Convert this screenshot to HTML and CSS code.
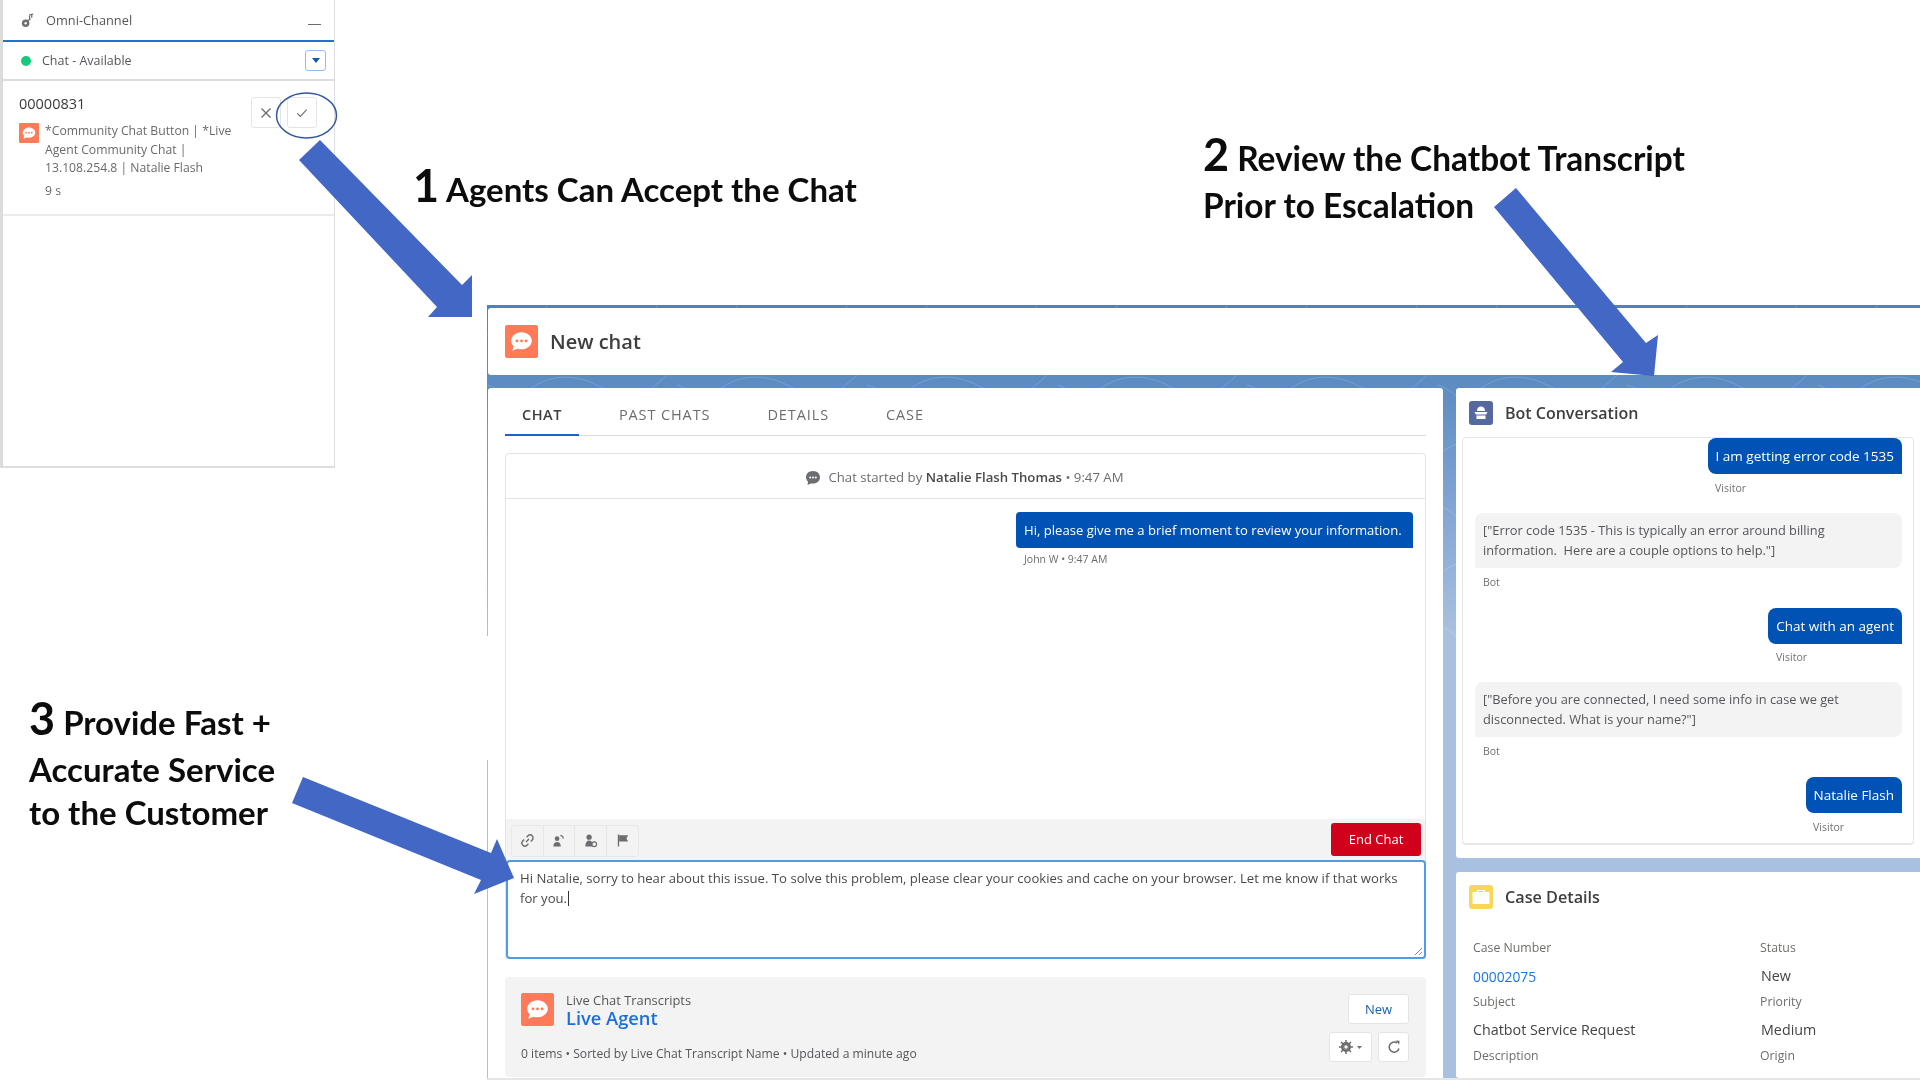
FILE: index.html
```html
<!DOCTYPE html>
<html>
<head>
  <title>Chatbot escalation</title>
  <meta name="viewport" content="width=device-width, initial-scale=1">
  <link rel="stylesheet" href="styles.css">
</head>
<body>
  <svg class="defs" width="0" height="0">
    <symbol id="chat-icon" viewBox="0 0 32 32">
      <rect width="32" height="32" rx="2" fill="#ff7a59"/>
      <path d="M16 7c-5.500 0-10 3.700-10 8.300 0 2 .9 3.800 2.300 5.200L7 25l5-2c1.200.4 2.600.6 4 .6 5.500 0 10-3.700 10-8.300S21.500 7 16 7z" fill="#fff"/>
      <circle cx="11.600" cy="15.400" r="1.400" fill="#ff7a59"/>
      <circle cx="16" cy="15.400" r="1.400" fill="#ff7a59"/>
      <circle cx="20.400" cy="15.400" r="1.400" fill="#ff7a59"/>
    </symbol>
  </svg>
  <div class="canvas">

    <div class="omni">
      <div class="omni-head">
        <svg class="omni-icon" viewBox="0 0 16 16"><circle cx="6" cy="11" r="4" fill="#706e6b"/><path d="M4 9.500 10.500 7 10 2.500M12.500 1v4M10 2l4-.8" fill="none" stroke="#706e6b" stroke-width="1.300"/><circle cx="6" cy="11" r="1.300" fill="#fff"/></svg>
        <span class="omni-title">Omni-Channel</span>
        <span class="omni-min"></span>
      </div>
      <div class="omni-status">
        <span class="status-dot"></span>
        <span>Chat - Available</span>
        <span class="status-drop"><i></i></span>
      </div>
      <div class="omni-item">
        <div class="omni-item-main">
          <div class="omni-num">00000831</div>
          <div class="omni-row">
            <svg class="omni-chat"><use href="#chat-icon"/></svg>
            <div class="omni-desc">
              *Community Chat Button | *Live<br>Agent Community Chat |<br>13.108.254.8 | Natalie Flash
              <div class="omni-time">9 s</div>
            </div>
          </div>
        </div>
        <div class="omni-actions">
          <button class="omni-btn"><svg viewBox="0 0 12 12"><path d="M1.500 1.500l9 9M10.500 1.500l-9 9" stroke="#6b6b6b" stroke-width="1.300"/></svg></button>
          <button class="omni-btn"><svg viewBox="0 0 14 12"><path d="M1.500 6.500 5 10l7.500-8" fill="none" stroke="#6b6b6b" stroke-width="1.200"/></svg></button>
        </div>
      </div>
    </div>

    <div class="console">
      <svg class="console-lines" width="1433" height="340">
        <defs>
          <pattern id="topo" width="190" height="120" patternUnits="userSpaceOnUse">
            <path d="M0 30c30-22 60-18 80 0s60 24 110 0M20 120c10-40 50-60 90-40s50 10 80-20M60 0c-6 30 20 44 50 36s50-6 60-36M0 80c20 6 30 20 24 40" fill="none" stroke="#fff" stroke-opacity=".16" stroke-width="1"/>
          </pattern>
        </defs>
        <rect width="1433" height="340" fill="url(#topo)"/>
      </svg>
      <div class="console-head">
        <svg class="head-icon"><use href="#chat-icon"/></svg>
        <span class="head-title">New chat</span>
      </div>
      <div class="console-body">
        <div class="col-left">
          <div class="tabs">
            <span class="tab active">CHAT</span>
            <span class="tab">PAST CHATS</span>
            <span class="tab">DETAILS</span>
            <span class="tab">CASE</span>
          </div>
          <div class="chat-box">
            <div class="chat-started">
              <svg class="started-icon" viewBox="0 0 16 16"><path d="M8 1C3.800 1 1 3.800 1 7.200c0 1.700.8 3.200 2 4.300L2.600 15l3.400-1.600c.6.1 1.300.2 2 .2 4.200 0 7-2.900 7-6.300S12.200 1 8 1z" fill="#6b6d70"/><circle cx="5.200" cy="7.400" r="1" fill="#fff"/><circle cx="8" cy="7.400" r="1" fill="#fff"/><circle cx="10.800" cy="7.400" r="1" fill="#fff"/></svg>
              <span>Chat started by <b>Natalie Flash Thomas</b> • 9:47 AM</span>
            </div>
            <div class="chat-log">
              <div class="agent-msg">Hi, please give me a brief moment to review your information.</div>
              <div class="agent-meta">John W • 9:47 AM</div>
            </div>
            <div class="chat-tools">
              <div class="tool-group">
                <span class="tool"><svg viewBox="0 0 16 16"><path d="M6.500 9.500 9.500 6.500M7 4.500l1.500-1.500a3 3 0 0 1 4.500 4.500L11.500 9M9 11.500 7.500 13A3 3 0 0 1 3 8.500L4.500 7" fill="none" stroke="#6b6d70" stroke-width="1.500"/></svg></span>
                <span class="tool"><svg viewBox="0 0 16 16"><circle cx="6.500" cy="6" r="2.500" fill="#6b6d70"/><path d="M2.500 14.500c0-3 1.500-5 4-5s4 2 4 5z" fill="#6b6d70"/><path d="M10 2.500c2 .3 3 1.500 3.200 3.500" fill="none" stroke="#6b6d70" stroke-width="1.200"/></svg></span>
                <span class="tool"><svg viewBox="0 0 16 16"><circle cx="6.500" cy="4.500" r="2.800" fill="#6b6d70"/><path d="M2.500 14.500c0-4 1.500-6.500 4-6.500 1.500 0 2.500.8 3.200 2v4.500z" fill="#6b6d70"/><circle cx="12" cy="12" r="2.500" fill="none" stroke="#6b6d70" stroke-width="1.200"/></svg></span>
                <span class="tool"><svg viewBox="0 0 16 16"><path d="M3 1.500h1.400v13H3z" fill="#6b6d70"/><path d="M4.400 2.500h9.600l-1.800 3.300 1.800 3.300H4.400z" fill="#6b6d70"/></svg></span>
              </div>
              <button class="end-chat">End Chat</button>
            </div>
            <div class="chat-input">
              Hi Natalie, sorry to hear about this issue. To solve this problem, please clear your cookies and cache on your browser. Let me know if that works<br>for you.<span class="caret"></span>
              <svg class="grip" viewBox="0 0 10 10"><path d="M9 2 2 9M9 6 6 9" stroke="#888" stroke-width="1"/></svg>
            </div>
          </div>
          <div class="transcripts">
            <div class="tr-top">
              <svg class="tr-icon"><use href="#chat-icon"/></svg>
              <div class="tr-title">
                <div class="tr-kind">Live Chat Transcripts</div>
                <div class="tr-name">Live Agent</div>
              </div>
              <button class="tr-new">New</button>
            </div>
            <div class="tr-bottom">
              <span class="tr-info">0 items • Sorted by Live Chat Transcript Name • Updated a minute ago</span>
              <span class="tr-btns">
                <button class="tr-gear"><svg viewBox="0 0 24 14"><circle cx="7" cy="7" r="3.800" fill="none" stroke="#6b6d70" stroke-width="2.400"/><path d="M7 0v14M0 7h14M2 2l10 10M12 2 2 12" stroke="#6b6d70" stroke-width="1.500"/><circle cx="7" cy="7" r="1.700" fill="#fff"/><path d="M18 6h5l-2.500 3z" fill="#6b6d70"/></svg></button>
                <button class="tr-refresh"><svg viewBox="0 0 14 14"><path d="M12 8.500A5 5 0 1 1 10 3" fill="none" stroke="#6b6d70" stroke-width="1.500"/><path d="M8.500 .5l4 .3-.3 4z" fill="#6b6d70"/></svg></button>
              </span>
            </div>
          </div>
        </div>

        <div class="col-right">
          <div class="card bot-card">
            <div class="card-head">
              <svg class="card-icon" viewBox="0 0 24 24"><rect width="24" height="24" rx="3" fill="#55699f"/><path d="M12 5.500c-2.500 0-4 1.700-4 4.500h8c0-2.800-1.500-4.500-4-4.500zM5.500 11h13l-1.300 2.500H6.800zM7.500 14.500h9v3.500h-9z" fill="#fff"/></svg>
              <span class="card-title">Bot Conversation</span>
            </div>
            <div class="bot-log">
              <div class="msg-out">I am getting error code 1535</div>
              <div class="meta-out first">Visitor</div>
              <div class="msg-in">["Error code 1535 - This is typically an error around billing<br>information.&nbsp; Here are a couple options to help."]</div>
              <div class="meta-in">Bot</div>
              <div class="msg-out">Chat with an agent</div>
              <div class="meta-out chat">Visitor</div>
              <div class="msg-in">["Before you are connected, I need some info in case we get<br>disconnected. What is your name?"]</div>
              <div class="meta-in">Bot</div>
              <div class="msg-out">Natalie Flash</div>
              <div class="meta-out name">Visitor</div>
            </div>
          </div>
          <div class="card case-card">
            <div class="card-head">
              <svg class="card-icon" viewBox="0 0 24 24"><rect width="24" height="24" rx="3" fill="#f9d558"/><path d="M8 7V5h8v2h3.500a1 1 0 0 1 1 1v10a1 1 0 0 1-1 1h-15a1 1 0 0 1-1-1V8a1 1 0 0 1 1-1z" fill="#fff"/><path d="M9.500 7V6h5v1z" fill="#f9d558"/></svg>
              <span class="card-title">Case Details</span>
            </div>
            <div class="case-grid">
              <div class="field"><label>Case Number</label><a>00002075</a></div>
              <div class="field"><label>Status</label><span>New</span></div>
              <div class="field"><label>Subject</label><span>Chatbot Service Request</span></div>
              <div class="field"><label>Priority</label><span>Medium</span></div>
              <div class="field"><label>Description</label></div>
              <div class="field"><label>Origin</label><span>Web</span></div>
            </div>
          </div>
        </div>
      </div>
    </div>

    <div class="line-mask"></div>

    <div class="note note-1"><b>1</b> Agents Can Accept the Chat</div>
    <div class="note note-2"><div><b>2</b> Review the Chatbot Transcript</div><div>Prior to Escalation</div></div>
    <div class="note note-3"><div><b>3</b> Provide Fast +</div><div>Accurate Service</div><div class="tight">to the Customer</div></div>

    <svg class="arrows" viewBox="0 0 1920 1080">
      <polygon points="320,140 462,285 472,275 472,317 428,317 437,307 299,160"/>
      <polygon points="1516,188 1646,343 1658,335 1654,376 1611,372 1623,362 1494,207"/>
      <polygon points="303,777 491,853 497,839 514,878 474,894 481,880 292,803"/>
      <ellipse class="ring" cx="306.500" cy="115.500" rx="30" ry="22.500"/>
    </svg>
  </div>
</body>
</html>
```

FILE: styles.css
```css
* {
  box-sizing: border-box;
}
body {
  margin: 0;
  background: #fff;
  font-family: "Open Sans", sans-serif;
  color: #3e3e3c;
}
button {
  font: inherit;
  cursor: pointer;
  background: #fff;
  padding: 0;
}
.defs {
  position: absolute;
}
.canvas {
  position: relative;
  width: 1920px;
  height: 1080px;
  overflow: hidden;
  background: #fff;
  filter: blur(.6px);
}

/* omni channel panel */
.omni {
  position: absolute;
  left: 0;
  top: 0;
  width: 335px;
  height: 468px;
  border-left: 3px solid #dcdcdc;
  border-right: 1px solid #dedede;
  border-bottom: 2px solid #dedede;
  font-size: 12.500px;
}
.omni-head {
  display: flex;
  align-items: center;
  height: 42px;
  padding: 0 13px 0 17px;
  border-bottom: 2px solid #1f72d1;
  color: #54565a;
}
.omni-icon {
  width: 15px;
  height: 15px;
  margin-right: 11px;
}
.omni-title {
  flex: 1;
  font-size: 12.800px;
}
.omni-min {
  width: 13px;
  height: 1px;
  margin-top: 8px;
  background: #6b6b6b;
}
.omni-status {
  display: flex;
  align-items: center;
  gap: 11px;
  height: 39px;
  padding: 0 8px 0 18px;
  border-bottom: 2px solid #dcdcdc;
  color: #54565a;
}
.status-dot {
  width: 10px;
  height: 10px;
  border-radius: 50%;
  background: #16c97c;
}
.status-drop {
  display: flex;
  align-items: center;
  justify-content: center;
  width: 21px;
  height: 21px;
  margin-left: auto;
  border: 1px solid #8fbdf0;
  border-radius: 3px;
}
.status-drop i {
  border: 4px solid transparent;
  border-top: 5px solid #0d5cb0;
  border-bottom: 0;
}
.omni-item {
  display: flex;
  justify-content: space-between;
  height: 135px;
  padding: 15px 17px 0 16px;
  border-bottom: 2px solid #ebebeb;
}
.omni-num {
  font-size: 14.500px;
  font-weight: 500;
  color: #3a3a3a;
  line-height: 16px;
}
.omni-row {
  display: flex;
  gap: 6px;
  margin-top: 10px;
}
.omni-chat {
  width: 20px;
  height: 20px;
  margin-top: 1px;
}
.omni-desc {
  color: #6a6a6a;
  line-height: 18.500px;
  font-size: 12.200px;
}
.omni-time {
  margin-top: 4px;
}
.omni-actions {
  display: flex;
  gap: 6px;
  margin-top: 1px;
}
.omni-btn {
  display: flex;
  align-items: center;
  justify-content: center;
  width: 30px;
  height: 31px;
  border: 1px solid #e4e4e4;
  border-radius: 3px;
}
.omni-btn svg {
  width: 12px;
  height: 12px;
}

/* console */
.console {
  position: absolute;
  left: 487px;
  top: 305px;
  width: 1433px;
  height: 775px;
  display: flex;
  flex-direction: column;
  padding: 3px 0 2px 1px;
  background: linear-gradient(#4f82bd 0, #5d8dc2 84px, #7ea3d2 190px, #a9c1e0 330px);
}
.console::after {
  content: "";
  position: absolute;
  left: 0;
  right: 0;
  bottom: 0;
  height: 2px;
  background: #e6e6e6;
}
.console-lines {
  position: absolute;
  left: 0;
  top: 0;
}
.console-head {
  position: relative;
  display: flex;
  align-items: center;
  flex: none;
  height: 67px;
  padding: 0 17px;
  background: #fff;
  border-radius: 3px 0 0 3px;
}
.head-icon {
  width: 33px;
  height: 33px;
  margin-right: 12px;
}
.head-title {
  font-size: 20px;
  font-weight: 600;
  color: #3e3e3c;
}
.console-body {
  position: relative;
  display: flex;
  flex: 1;
  min-height: 0;
  gap: 13px;
  padding-top: 13px;
}

.col-left {
  width: 955px;
  padding: 0 17px;
  background: #fff;
  border-radius: 3px 3px 0 0;
  overflow: hidden;
}
.tabs {
  display: flex;
  height: 48px;
  border-bottom: 1px solid #dddbda;
}
.tab {
  padding: 17px 17px 0;
  margin-right: 23px;
  font-size: 14.500px;
  font-weight: 500;
  color: #6b6d70;
  letter-spacing: .9px;
}
.tab.active {
  color: #3e3e3c;
  font-weight: 600;
  letter-spacing: .5px;
  border-bottom: 2px solid #1f62c4;
  height: 48px;
}
.chat-box {
  display: flex;
  flex-direction: column;
  height: 506px;
  margin-top: 17px;
  border: 1px solid #e3e3e3;
  border-radius: 4px 4px 0 0;
}
.chat-started {
  display: flex;
  align-items: center;
  justify-content: center;
  gap: 7px;
  flex: none;
  height: 45px;
  padding-top: 1px;
  padding-right: 2px;
  border-bottom: 1px solid #e3e3e3;
  font-size: 13.200px;
  color: #6b6d70;
}
.chat-started b {
  font-weight: 600;
  color: #4a4a4a;
}
.started-icon {
  width: 16px;
  height: 16px;
  margin-top: 3px;
}
.chat-log {
  display: flex;
  flex-direction: column;
  align-items: flex-end;
  flex: 1;
  padding: 13px 12px 0 0;
}
.agent-msg {
  width: 397px;
  height: 36px;
  padding-left: 8px;
  line-height: 36px;
  background: #0052b4;
  color: #fff;
  font-size: 13.100px;
  white-space: nowrap;
  border-radius: 4px 4px 0 4px;
}
.agent-meta {
  width: 397px;
  padding: 4px 8px;
  font-size: 10.500px;
  line-height: 14px;
  color: #6b6d70;
}
.chat-tools {
  display: flex;
  align-items: center;
  justify-content: space-between;
  flex: none;
  height: 41px;
  padding: 0 4px 1px 5px;
  background: #f3f3f3;
}
.tool-group {
  display: flex;
  height: 32px;
  margin-top: 3px;
  border: 1px solid #e8e8e8;
  border-radius: 3px;
}
.tool {
  display: flex;
  align-items: center;
  justify-content: center;
  width: 31.500px;
  border-right: 1px solid #e6e6e6;
}
.tool:last-child {
  border-right: 0;
}
.tool svg {
  width: 15px;
  height: 15px;
}
.end-chat {
  width: 90px;
  height: 33px;
  border: 0;
  border-radius: 3px;
  background: #d0021b;
  color: #fff;
  font-size: 13px;
  font-weight: 500;
}
.chat-input {
  position: relative;
  flex: none;
  height: 99px;
  margin: 0 -1px -1px 0;
  padding: 7px 12px 0;
  border: 2px solid #4f9be8;
  border-radius: 4px;
  background: #fff;
  font-size: 13.130px;
  line-height: 19.800px;
  color: #4a4a4a;
  white-space: nowrap;
}
.caret {
  display: inline-block;
  width: 1px;
  height: 15px;
  margin-left: 1px;
  vertical-align: -3px;
  background: #333;
}
.grip {
  position: absolute;
  right: 1px;
  bottom: 1px;
  width: 10px;
  height: 10px;
}
.transcripts {
  height: 100px;
  margin-top: 18px;
  padding: 16px 17px 0 16px;
  background: #f3f3f3;
  border-radius: 4px;
}
.tr-top {
  display: flex;
  align-items: flex-start;
  height: 39px;
}
.tr-icon {
  width: 33px;
  height: 33px;
  margin-right: 12px;
}
.tr-kind {
  font-size: 12.900px;
  line-height: 15px;
  color: #54565a;
}
.tr-name {
  font-size: 18.300px;
  font-weight: 600;
  line-height: 19px;
  color: #1b6fdc;
}
.tr-new {
  width: 61px;
  height: 30px;
  margin-left: auto;
  margin-top: 1px;
  border: 1px solid #e4e4e4;
  border-radius: 3px;
  color: #1b5fa8;
  font-size: 13px;
}
.tr-bottom {
  display: flex;
  align-items: center;
  justify-content: space-between;
}
.tr-info {
  margin-top: 12px;
  font-size: 12.150px;
  color: #54565a;
}
.tr-btns {
  display: flex;
  gap: 6px;
}
.tr-gear,
.tr-refresh {
  display: flex;
  align-items: center;
  justify-content: center;
  height: 30px;
  border: 1px solid #e4e4e4;
  border-radius: 3px;
}
.tr-gear {
  width: 43px;
}
.tr-gear svg {
  width: 24px;
  height: 14px;
}
.tr-refresh {
  width: 31px;
}
.tr-refresh svg {
  width: 14px;
  height: 14px;
}

/* right column */
.col-right {
  display: flex;
  flex-direction: column;
  flex: 1;
  gap: 14px;
  min-width: 0;
}
.card {
  background: #fff;
  border-radius: 3px 0 0 3px;
  overflow: hidden;
}
.bot-card {
  flex: none;
  height: 470px;
  padding: 0 6px;
}
.card-head {
  display: flex;
  align-items: center;
  gap: 12px;
  height: 49px;
  padding-left: 7px;
}
.card-icon {
  flex: none;
  width: 24px;
  height: 24px;
}
.card-title {
  font-size: 16px;
  font-weight: 600;
  color: #3e3e3c;
}
.bot-log {
  display: flex;
  flex-direction: column;
  align-items: flex-end;
  height: 407px;
  padding: 0 11px 0 12px;
  border: 1px solid #e6e6e6;
  border-radius: 4px;
  box-shadow: 0 1px 1px #e4e4e4;
}
.bot-log > div {
  flex: none;
}
.msg-out {
  height: 36px;
  padding: 0 8px;
  line-height: 37px;
  font-size: 13.500px;
  color: #fff;
  background: #0052b4;
  border-radius: 8px 8px 0 8px;
  white-space: nowrap;
}
.meta-out,
.meta-in {
  font-size: 10.500px;
  line-height: 14px;
  color: #6f7173;
}
.meta-out {
  margin-top: 7px;
  margin-bottom: 18px;
}
.meta-out.first {
  margin-right: 156px;
}
.meta-out.chat {
  margin-top: 6px;
  margin-right: 95px;
}
.meta-out.name {
  margin-right: 58px;
}
.msg-in {
  align-self: stretch;
  height: 55px;
  padding: 8px 8px 0;
  line-height: 19.800px;
  font-size: 12.800px;
  color: #54565a;
  background: #f3f3f3;
  border-radius: 8px 8px 8px 0;
  white-space: nowrap;
}
.meta-in {
  align-self: flex-start;
  margin: 7px 0 19px 8px;
}
.case-card {
  flex: 1;
  padding-left: 13px;
}
.case-card .card-head {
  height: 50px;
  gap: 12px;
  padding-left: 0;
}
.case-card .card-title {
  font-size: 16.200px;
}
.case-grid {
  display: grid;
  grid-template-columns: 287px 1fr;
  padding: 15px 0 0 4px;
}
.field {
  height: 54px;
  font-size: 12.300px;
  color: #706e6b;
}
.field label {
  display: block;
  height: 22px;
  line-height: 22px;
}
.field span,
.field a {
  display: block;
  font-size: 14.300px;
  line-height: 34px;
  color: #444;
}
.field a {
  font-size: 13.800px;
  line-height: 36px;
  color: #1b74e4;
}
.field:nth-child(even) span {
  padding-left: 1px;
}

/* annotations on top of the screenshot */
.line-mask {
  position: absolute;
  left: 480px;
  top: 636px;
  width: 12px;
  height: 124px;
  background: #fff;
}
.note {
  position: absolute;
  font-family: Lato, sans-serif;
  font-weight: 700;
  font-size: 33px;
  color: #0c0c0c;
  white-space: nowrap;
}
.note div {
  height: 47px;
  line-height: 47px;
}
.note .tight {
  margin-top: -4px;
}
.note b {
  font-size: 45px;
  font-weight: 700;
  line-height: 0;
}
.note-1 {
  left: 413px;
  top: 166px;
  line-height: 47px;
}
.note-2 {
  left: 1203px;
  top: 135px;
  font-size: 33.400px;
}
.note-3 {
  left: 29px;
  top: 699px;
}
.arrows {
  position: absolute;
  left: 0;
  top: 0;
  width: 1920px;
  height: 1080px;
  fill: #4267c4;
}
.ring {
  fill: none;
  stroke: #34589f;
  stroke-width: 1.500;
}
```
